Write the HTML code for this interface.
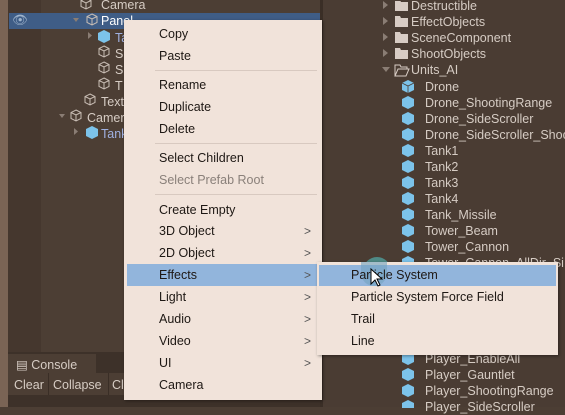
<!DOCTYPE html>
<html><head><style>
*{margin:0;padding:0;box-sizing:border-box}
body{width:565px;height:407px;overflow:hidden;background:#4c3e34;font-family:"Liberation Sans",sans-serif;position:relative}
.a{position:absolute}
.t{position:absolute;font-size:12.5px;color:#d6ccc4;white-space:nowrap;line-height:16px;margin-top:1px}
.m{position:absolute;font-size:12.5px;color:#1e1814;white-space:nowrap;line-height:16px;margin-top:1px}
.ar{position:absolute;font-size:12px;color:#555;line-height:16px;margin-top:1px}
.sep{position:absolute;height:1px;background:#d8c9c0}
</style></head><body>
<div class="a" style="left:0;top:0;width:8px;height:407px;background:#7a6455"></div>
<div class="a" style="left:8px;top:0;width:33px;height:352px;background:#45372e"></div>
<div class="a" style="left:320px;top:0;width:3px;height:407px;background:#3a2e26"></div>
<div class="a" style="left:323px;top:0;width:242px;height:407px;background:#4a3c33"></div>
<div class="a" style="left:9px;top:13px;width:311px;height:16px;background:#3f5d86"></div>
<div class="t" style="left:12px;top:11px;color:#9fb4cc">👁</div>
<svg class="a" style="left:0;top:0" width="320" height="150">
<g fill="none" stroke="#c9beb5" stroke-width="1">
<path d="M86 0 l5 2.5 v6 l-5 2.5 l-5-2.5 v-6z M81 2.5 l5 2.5 l5-2.5 M86 5 v6" transform="translate(0,-2)"/>
<path d="M92 14 l5 2.5 v6 l-5 2.5 l-5-2.5 v-6z M87 16.5 l5 2.5 l5-2.5 M92 19 v6"/>
<path d="M104 62 l5 2.5 v6 l-5 2.5 l-5-2.5 v-6z M99 64.5 l5 2.5 l5-2.5 M104 67 v6" transform="translate(0,-16)"/>
<path d="M104 62 l5 2.5 v6 l-5 2.5 l-5-2.5 v-6z M99 64.5 l5 2.5 l5-2.5 M104 67 v6"/>
<path d="M104 78 l5 2.5 v6 l-5 2.5 l-5-2.5 v-6z M99 80.5 l5 2.5 l5-2.5 M104 83 v6"/>
<path d="M90 94 l5 2.5 v6 l-5 2.5 l-5-2.5 v-6z M85 96.5 l5 2.5 l5-2.5 M90 99 v6"/>
<path d="M76 110 l5 2.5 v6 l-5 2.5 l-5-2.5 v-6z M71 112.5 l5 2.5 l5-2.5 M76 115 v6"/>
</g>
<g fill="#7cc3ea"><path d="M104 30 l6 3 v7 l-6 3 l-6-3 v-7z"/><path d="M92 126 l6 3 v7 l-6 3 l-6-3 v-7z"/></g>
<g fill="#8a7d74"><path d="M73 18 h6 l-3 4z"/><path d="M59 114 h6 l-3 4z"/><path d="M88 32 v7 l4-3.5z"/><path d="M74 128 v7 l4-3.5z"/></g>
</svg>
<div class="t" style="left:101px;top:-4px">Camera</div>
<div class="t" style="left:101px;top:12px;color:#fff">Panel</div>
<div class="t" style="left:115px;top:29px;color:#9fb0e0">Ta</div>
<div class="t" style="left:115px;top:45px">S</div>
<div class="t" style="left:115px;top:61px">S</div>
<div class="t" style="left:115px;top:77px">T</div>
<div class="t" style="left:101px;top:93px">Text</div>
<div class="t" style="left:87px;top:109px">Camera</div>
<div class="t" style="left:101px;top:125px;color:#9fb0e0">Tank</div>
<div class="a" style="left:8px;top:352px;width:312px;height:55px;background:#3d3129"></div>
<div class="a" style="left:8px;top:354px;width:88px;height:19px;background:#4c3e34"></div>
<div class="t" style="left:16px;top:356px">▤ Console</div>
<div class="a" style="left:8px;top:373px;width:312px;height:22px;background:#4c3e34"></div>
<div class="a" style="left:48px;top:373px;width:1px;height:22px;background:#3a2e26"></div>
<div class="a" style="left:108px;top:373px;width:1px;height:22px;background:#3a2e26"></div>
<div class="t" style="left:14px;top:376px">Clear</div>
<div class="t" style="left:53px;top:376px">Collapse</div>
<div class="t" style="left:112px;top:376px">Cl</div>
<svg class="a" style="left:380px;top:1px" width="185" height="407">
<g fill="#8a7d74"><path d="M3 0 v8 l5-4z"/><path d="M3 16 v8 l5-4z"/><path d="M3 32 v8 l5-4z"/><path d="M3 48 v8 l5-4z"/><path d="M2 66 h8 l-4 5z"/></g>
<g fill="#d8ccc4"><path d="M15 -1 h5 l1 2 h7 v9 h-13z"/><path d="M15 15 h5 l1 2 h7 v9 h-13z"/><path d="M15 31 h5 l1 2 h7 v9 h-13z"/><path d="M15 47 h5 l1 2 h7 v9 h-13z"/></g>
<path d="M15 64 h5 l1 2 h6 v2 h-9 l-3 7z M18 68 h11 l-3 7 h-11z" fill="none" stroke="#d8ccc4"/>
<g fill="#7cc3ea">
<path d="M28 79 l6 3 v7 l-6 3 l-6-3 v-7z"/><path d="M28 95 l6 3 v7 l-6 3 l-6-3 v-7z"/><path d="M28 111 l6 3 v7 l-6 3 l-6-3 v-7z"/><path d="M28 127 l6 3 v7 l-6 3 l-6-3 v-7z"/><path d="M28 143 l6 3 v7 l-6 3 l-6-3 v-7z"/><path d="M28 159 l6 3 v7 l-6 3 l-6-3 v-7z"/><path d="M28 175 l6 3 v7 l-6 3 l-6-3 v-7z"/><path d="M28 191 l6 3 v7 l-6 3 l-6-3 v-7z"/><path d="M28 207 l6 3 v7 l-6 3 l-6-3 v-7z"/><path d="M28 223 l6 3 v7 l-6 3 l-6-3 v-7z"/><path d="M28 239 l6 3 v7 l-6 3 l-6-3 v-7z"/><path d="M28 255 l6 3 v7 l-6 3 l-6-3 v-7z"/><path d="M28 351 l6 3 v7 l-6 3 l-6-3 v-7z"/><path d="M28 367 l6 3 v7 l-6 3 l-6-3 v-7z"/><path d="M28 383 l6 3 v7 l-6 3 l-6-3 v-7z"/><path d="M28 399 l6 3 v7 l-6 3 l-6-3 v-7z"/>
</g>
<g stroke="#4a3c33" stroke-width="0.8" fill="none"><path d="M22 82 l6 3 l6-3 M28 85 v7"/></g>
</svg>
<div class="t" style="left:411px;top:-3px">Destructible</div>
<div class="t" style="left:411px;top:13px">EffectObjects</div>
<div class="t" style="left:411px;top:29px">SceneComponent</div>
<div class="t" style="left:411px;top:45px">ShootObjects</div>
<div class="t" style="left:411px;top:61px">Units_AI</div>
<div class="t" style="left:425px;top:78px">Drone</div>
<div class="t" style="left:425px;top:94px">Drone_ShootingRange</div>
<div class="t" style="left:425px;top:110px">Drone_SideScroller</div>
<div class="t" style="left:425px;top:126px">Drone_SideScroller_Shoo</div>
<div class="t" style="left:425px;top:142px">Tank1</div>
<div class="t" style="left:425px;top:158px">Tank2</div>
<div class="t" style="left:425px;top:174px">Tank3</div>
<div class="t" style="left:425px;top:190px">Tank4</div>
<div class="t" style="left:425px;top:206px">Tank_Missile</div>
<div class="t" style="left:425px;top:222px">Tower_Beam</div>
<div class="t" style="left:425px;top:238px">Tower_Cannon</div>
<div class="t" style="left:425px;top:254px">Tower_Cannon_AllDir_Si</div>
<div class="t" style="left:425px;top:350px">Player_EnableAll</div>
<div class="t" style="left:425px;top:366px">Player_Gauntlet</div>
<div class="t" style="left:425px;top:382px">Player_ShootingRange</div>
<div class="t" style="left:425px;top:398px">Player_SideScroller</div>
<div class="a" style="left:124px;top:20px;width:198px;height:380px;background:#f1e3da;box-shadow:1px 1px 3px rgba(0,0,0,.4)"></div>
<div class="sep" style="left:155px;top:70px;width:162px"></div>
<div class="sep" style="left:155px;top:143px;width:162px"></div>
<div class="sep" style="left:155px;top:194px;width:162px"></div>
<div class="a" style="left:127px;top:264px;width:190px;height:22px;background:#92b5dc"></div>
<div class="m" style="left:159px;top:25px">Copy</div>
<div class="m" style="left:159px;top:47px">Paste</div>
<div class="m" style="left:159px;top:76px">Rename</div>
<div class="m" style="left:159px;top:98px">Duplicate</div>
<div class="m" style="left:159px;top:120px">Delete</div>
<div class="m" style="left:159px;top:149px">Select Children</div>
<div class="m" style="left:159px;top:171px;color:#8a807a">Select Prefab Root</div>
<div class="m" style="left:159px;top:201px">Create Empty</div>
<div class="m" style="left:159px;top:222px">3D Object</div>
<div class="m" style="left:159px;top:244px">2D Object</div>
<div class="m" style="left:159px;top:266px">Effects</div>
<div class="m" style="left:159px;top:288px">Light</div>
<div class="m" style="left:159px;top:310px">Audio</div>
<div class="m" style="left:159px;top:332px">Video</div>
<div class="m" style="left:159px;top:354px">UI</div>
<div class="m" style="left:159px;top:376px">Camera</div>
<div class="ar" style="left:304px;top:222px">&gt;</div>
<div class="ar" style="left:304px;top:244px">&gt;</div>
<div class="ar" style="left:304px;top:266px">&gt;</div>
<div class="ar" style="left:304px;top:288px">&gt;</div>
<div class="ar" style="left:304px;top:310px">&gt;</div>
<div class="ar" style="left:304px;top:332px">&gt;</div>
<div class="ar" style="left:304px;top:354px">&gt;</div>
<div class="a" style="left:363px;top:257px;width:28px;height:28px;border-radius:50%;background:#4f8a86"></div>
<div class="a" style="left:317px;top:262px;width:241px;height:93px;background:#f1e3da;box-shadow:1px 1px 3px rgba(0,0,0,.4)"></div>
<div class="a" style="left:319px;top:265px;width:237px;height:21px;background:#92b5dc"></div>
<div class="a" style="left:361px;top:262px;width:26px;height:24px;border-radius:0 0 13px 13px;background:#73a3bf;opacity:.6"></div>
<div class="m" style="left:351px;top:266px">Particle System</div>
<div class="m" style="left:351px;top:288px">Particle System Force Field</div>
<div class="m" style="left:351px;top:310px">Trail</div>
<div class="m" style="left:351px;top:332px">Line</div>
<svg class="a" style="left:370px;top:268px" width="14" height="22"><path d="M1 1 v15 l4-4 l3 6 l2-1 l-3-6 h5z" fill="#fff" stroke="#000"/></svg>
</body></html>
